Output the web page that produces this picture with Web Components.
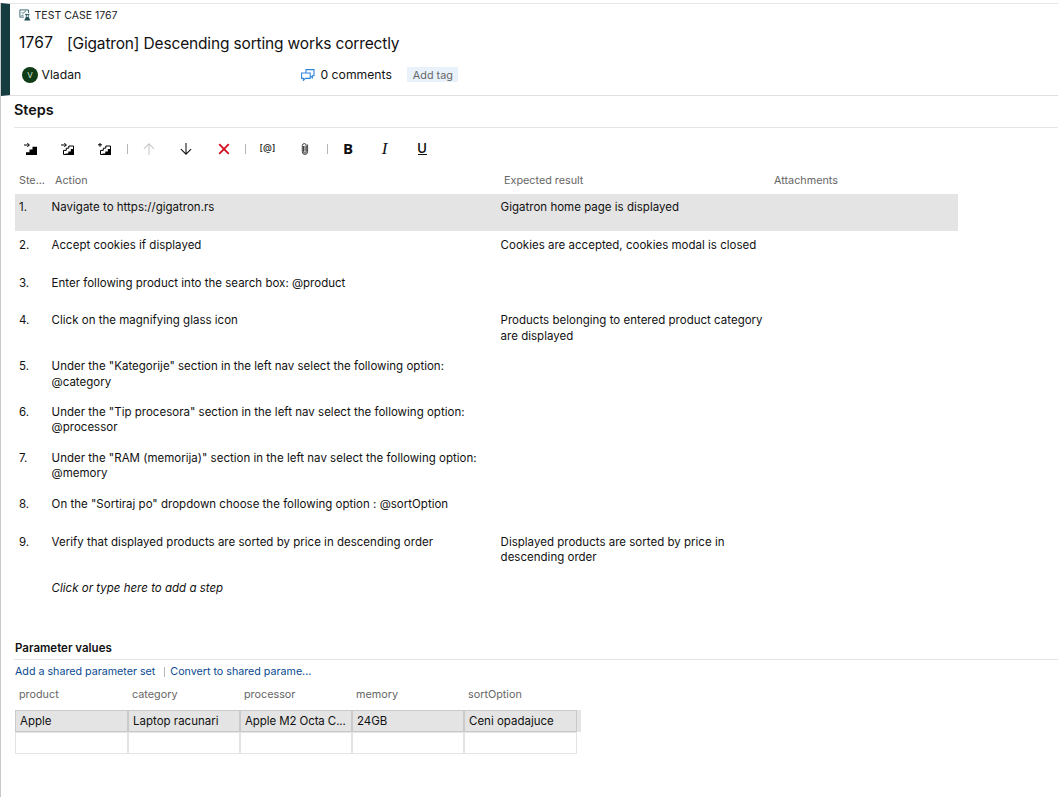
<!DOCTYPE html>
<html lang="en">
<head>
<meta charset="utf-8">
<title>Test Case 1767</title>
<style>
html,body{margin:0;height:100%;background:#fff;overflow:hidden}
body{font-family:Inter,"Liberation Sans",sans-serif;color:#111;font-size:11.5px}
</style>
</head>
<body>
<test-case-page></test-case-page>
<script>
const define = (name, html, init) => customElements.define(name, class extends HTMLElement {
  connectedCallback() {
    if (this.shadowRoot) return;
    this.attachShadow({ mode: 'open' }).innerHTML = html;
    if (init) init(this, this.shadowRoot);
  }
});

const ICONS = {
  testcase: [12, 12, '<path d="M9.500 4V.9H.9v7.200h4" fill="none" stroke="#3f7076" stroke-width="1"/><path d="M2.600 3.200l1.200 1.200L7 1.800M2.400 6.300h2" fill="none" stroke="#3f7076" stroke-width=".9"/><path d="M6 5.400h4.400M7.300 5.400v2.400M9.300 5.400v2.400" fill="none" stroke="#1f4f55" stroke-width=".9"/><path d="M7 8h2.600l1.900 3.500H5.100z" fill="#1f4f55"/>'],
  comments: [14, 12, '<path d="M5 4V.6h8v6.200h-1.600v1.900L9.500 7" fill="none" stroke="#2e86dc" stroke-width="1.100"/><path d="M.6 4h8.600v5.400H4.400L2.400 11.400V9.400H.6z" fill="#fff" stroke="#2e86dc" stroke-width="1.100"/>'],
  insert: [13, 12, '<path d="M13 3.800V12H2V9.300h3.500V6.500h3V3.800z"/><path d="M0 2h5.300M3.300 0l2 2-2 2" fill="none" stroke="#000"/>'],
  shared: [13, 12, '<path d="M13 6V12H4.500v-1.500H7.300V8.500h2.500V6z"/><path d="M0 2h5.300M3.300 0l2 2-2 2M12.500 6.500V3H7.800V5.200H5.300v2.200H2.500v4.100H5" fill="none" stroke="#000"/>'],
  create: [13, 12, '<path d="M13 6V12H4.500v-1.500H7.300V8.500h2.500V6z"/><path d="M0 1.800h4M2 0v3.800M12.500 6.500V3H7.800V5.200H5.300v2.200H2.500v4.100H5" fill="none" stroke="#000"/>'],
  up: [12, 12, '<path d="M6 12V.8M.9 5.900L6 .8l5.100 5.100" fill="none" stroke="#c8c8c8" stroke-width="1.050"/>'],
  down: [12, 12, '<path d="M6 0v11.200M.9 6.100L6 11.200l5.100-5.100" fill="none" stroke="#111" stroke-width="1.050"/>'],
  remove: [12, 12, '<path d="M1.200 1.200l9.600 9.600M10.800 1.200l-9.600 9.600" fill="none" stroke="#d40b1c" stroke-width="1.800"/>'],
  clip: [8, 12, '<path d="M2.500 3v5.700a1.400 1.400 0 002.800 0V2.600a2 2 0 00-4 0v6.200a2.600 2.600 0 005.300 0V1.500M4 2.800v5.800" fill="none" stroke="#111" stroke-width=".8"/>']
};
define('ui-icon', `<style>:host{display:block;flex:none}svg{display:block}</style>`, (el, root) => {
  const [w, h, body] = ICONS[el.getAttribute('name')];
  root.innerHTML += `<svg width="${w}" height="${h}" viewBox="0 0 ${w} ${h}">${body}</svg>`;
});

define('case-header', `<style>
:host{display:block;height:93px;box-sizing:border-box;border-left:9px solid #153d40;border-top:1px solid #e6e6e6;border-bottom:1px solid #e0e0e0;padding-left:9px}
.row{display:flex;align-items:center;white-space:nowrap}
.kind{height:22px;font-size:10.5px;gap:3.500px;color:#222;letter-spacing:.02px}
.title{height:34px;font-size:15.500px;letter-spacing:-.16px}
.id{width:48px;letter-spacing:.25px;position:relative;top:-1px}
.meta{height:29px;font-size:12.200px}
.avatar{width:16px;height:16px;border-radius:50%;background:#103d17;color:#d8e8da;font-size:8px;display:grid;place-items:center;margin:0 3.500px 0 3px}
.name{width:259.500px}
.count{margin-left:5.500px}
.tag{background:#e9f2fb;color:#666;font-size:10.800px;height:15px;line-height:17px;width:51px;text-align:center;margin-left:15.500px}
</style>
<div class="row kind"><ui-icon name="testcase"></ui-icon><span>TEST CASE 1767</span></div>
<div class="row title"><span class="id">1767</span><span>[Gigatron] Descending sorting works correctly</span></div>
<div class="row meta"><span class="avatar">V</span><span class="name">Vladan</span><ui-icon name="comments"></ui-icon><span class="count">0 comments</span><span class="tag">Add tag</span></div>`);

define('section-title', `<style>:host{display:block;box-sizing:border-box;border-bottom:1px solid #e4e4e4;font-weight:600;white-space:nowrap}</style><slot></slot>`);

define('step-toolbar', `<style>
:host{display:flex;align-items:center;height:41px}
.b{display:flex;justify-content:center;flex:none}
.s{width:1px;height:10px;background:#b5b5b5;flex:none}
.at{font-size:9px;letter-spacing:.1px;font-weight:500;padding-bottom:2px}
.bold{font:700 15px/20px "Open Sans",sans-serif;padding-bottom:2px}.it{font:italic 17px/20px "Liberation Serif",serif}
.un{font:600 13.500px/12px "Open Sans",sans-serif;border-bottom:1px solid #111;width:9px;display:flex;justify-content:center}
</style>
<span class="b" style="width:31px"><ui-icon name="insert"></ui-icon></span><span class="b" style="width:43px"><ui-icon name="shared"></ui-icon></span><span class="b" style="width:31px"><ui-icon name="create"></ui-icon></span><span class="s" style="margin-left:7px"></span>
<span class="b" style="width:41px"><ui-icon name="up"></ui-icon></span><span class="b" style="width:33px"><ui-icon name="down"></ui-icon></span><span class="b" style="width:43px"><ui-icon name="remove"></ui-icon></span><span class="s"></span>
<span class="b" style="width:43px"><span class="at">[@]</span></span><span class="b" style="width:32px"><ui-icon name="clip"></ui-icon></span><span class="s" style="margin-left:6px"></span>
<span class="b" style="width:40px"><span class="bold">B</span></span><span class="b" style="width:33px"><span class="it">I</span></span><span class="b" style="width:42px"><span class="un">U</span></span>`);

define('step-row', `<style>
:host{display:grid;grid-template-columns:36.600px 449px 270px 1fr;box-sizing:border-box;width:943px;padding-top:6px;line-height:15.400px;letter-spacing:.01px;white-space:nowrap}
:host([selected]){background:#e4e4e4}
:host([placeholder]){font-style:italic}
.n{padding-left:4px}
::slotted(*){display:block}
</style><span class="n"></span><span><slot></slot></span><span><slot name="expected"></slot></span><span></span>`,
(el, root) => root.querySelector('.n').textContent = el.getAttribute('n') || '');

define('steps-list', `<style>
:host{display:block}
.head{display:grid;grid-template-columns:40px 449px 270px 1fr;height:25px;line-height:24px;color:#666;font-size:10.800px}
.head span:first-child{padding-left:4px}
step-row{height:var(--h)}
.loose{line-height:16px;padding-top:5px}
</style>
<div class="head"><span>Ste...</span><span>Action</span><span>Expected result</span><span>Attachments</span></div>
<step-row n="1." selected style="--h:37px">Navigate to https://gigatron.rs<span slot="expected">Gigatron home page is displayed</span></step-row>
<step-row n="2." style="--h:38px;padding-top:7px">Accept cookies if displayed<span slot="expected">Cookies are accepted, cookies modal is closed</span></step-row>
<step-row n="3." style="--h:38px;padding-top:7px">Enter following product into the search box: @product</step-row>
<step-row n="4." class="loose" style="--h:46px">Click on the magnifying glass icon<span slot="expected">Products belonging to entered product category<br>are displayed</span></step-row>
<step-row n="5." class="loose" style="--h:46px">Under the "Kategorije" section in the left nav select the following option:<br>@category</step-row>
<step-row n="6." style="--h:46px">Under the "Tip procesora" section in the left nav select the following option:<br>@processor</step-row>
<step-row n="7." style="--h:46px">Under the "RAM (memorija)" section in the left nav select the following option:<br>@memory</step-row>
<step-row n="8." style="--h:38px">On the "Sortiraj po" dropdown choose the following option : @sortOption</step-row>
<step-row n="9." style="--h:46px">Verify that displayed products are sorted by price in descending order<span slot="expected">Displayed products are sorted by price in<br>descending order</span></step-row>
<step-row placeholder style="--h:38px">Click or type here to add a step</step-row>`);

define('param-table', `<style>
:host{display:block}
.links{display:flex;height:23px;line-height:23px;color:#0b4a91;font-size:10.700px;align-items:center;white-space:nowrap}
.links i{width:1px;height:10px;background:#b5b5b5;margin:0 5px 0 9px}
.r{display:grid;grid-template-columns:113px 112px 112px 112px 113px}
.h{height:27px;line-height:24px;color:#666;font-size:10.800px}
.h span{padding-left:4px}
.r.v{background:#e4e4e4;width:566px;height:22px}
.c{box-sizing:border-box;height:22px;border:1px solid #e4e4e4;line-height:20px;padding-left:4px;white-space:nowrap}
.v .c{border-color:#cacaca}
</style>
<div class="links"><span>Add a shared parameter set</span><i></i><span>Convert to shared parame...</span></div>
<div class="r h"><span>product</span><span>category</span><span>processor</span><span>memory</span><span>sortOption</span></div>
<div class="r v"><span class="c">Apple</span><span class="c">Laptop racunari</span><span class="c" style="letter-spacing:-.1px">Apple M2 Octa C...</span><span class="c">24GB</span><span class="c">Ceni opadajuce</span></div>
<div class="r"><span class="c"></span><span class="c"></span><span class="c"></span><span class="c"></span><span class="c"></span></div>`);

define('test-case-page', `<style>
:host{display:block;box-sizing:border-box;height:797px;padding-top:3px}
main{height:794px;box-sizing:border-box;border-left:1px solid #c8c8c8}
.body{padding-left:14px}
.st{height:32px;font-size:14.400px;line-height:28px;margin-left:-1px}
.pv{height:20px;font-size:11.500px;line-height:17px;margin:27px 0 0 -1px;padding-left:1px}
</style>
<main><case-header></case-header><div class="body">
<section-title class="st">Steps</section-title>
<step-toolbar></step-toolbar><steps-list></steps-list>
<section-title class="pv">Parameter values</section-title>
<param-table></param-table></div></main>`);
</script>
</body>
</html>
